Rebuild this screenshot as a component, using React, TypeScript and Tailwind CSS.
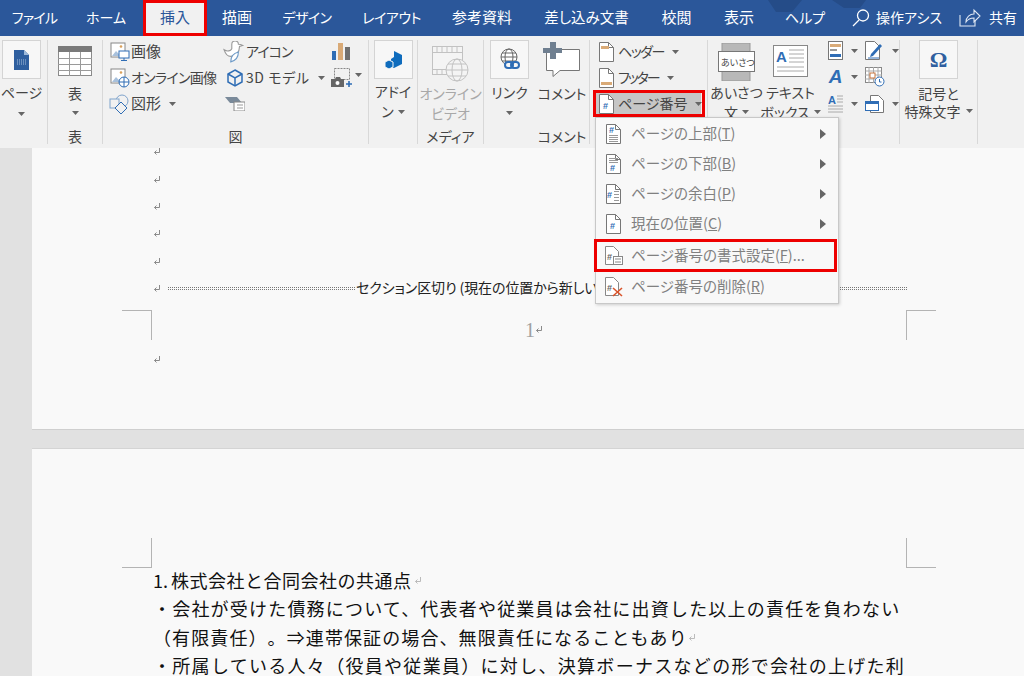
import type { ReactNode } from "react";

const TABS = [
  { label: "ファイル", w: "w-[69px]", t: "text-[14px] tracking-[-0.8px]" },
  { label: "ホーム", w: "w-[74px]", t: "text-[14px]" },
  { label: "挿入", w: "w-[64px]", t: "text-[15px]" },
  { label: "描画", w: "w-[60px]", t: "text-[15px]" },
  { label: "デザイン", w: "w-[80px]", t: "text-[14px] tracking-[-0.6px]" },
  { label: "レイアウト", w: "w-[89px]", t: "text-[14px] tracking-[-0.5px]" },
  { label: "参考資料", w: "w-[92px]", t: "text-[15px]" },
  { label: "差し込み文書", w: "w-[117px]", t: "text-[14.5px]" },
  { label: "校閲", w: "w-[63px]", t: "text-[15px]" },
  { label: "表示", w: "w-[62px]", t: "text-[15px]" },
  { label: "ヘルプ", w: "w-[70px]", t: "text-[14px]" },
];

function Caret({ className = "" }: { className?: string }) {
  return (
    <svg width="7" height="4" viewBox="0 0 7 4" className={`shrink-0 ${className}`}>
      <path d="M0 0h7L3.5 4z" fill="#666" />
    </svg>
  );
}

function ReturnMark({ color = "#8a8a8a" }: { color?: string }) {
  return (
    <svg width="8" height="9" viewBox="0 0 8 9" className="shrink-0">
      <path d="M6.5 1v4.5H1.5M3.5 3.5l-2 2 2 2" fill="none" stroke={color} strokeWidth="1" />
    </svg>
  );
}

function DocIcon({ children, className = "" }: { children?: ReactNode; className?: string }) {
  return (
    <svg width="17" height="20" viewBox="0 0 17 20" className={`shrink-0 ${className}`}>
      <path d="M1.5.5h9l5 5v14h-14z" fill="#fff" stroke="#777" />
      <path d="M10.5.5v5h5" fill="none" stroke="#777" />
      {children}
    </svg>
  );
}

function Hash({ x = 5, y = 15 }: { x?: number; y?: number }) {
  return (
    <text x={x} y={y} fontSize="9" fontWeight="700" fill="#2f6db5" fontFamily="Liberation Sans">
      #
    </text>
  );
}

function Lines({ ys, x1 = 4, x2 = 13 }: { ys: number[]; x1?: number; x2?: number }) {
  return (
    <>
      {ys.map((y) => (
        <path key={y} d={`M${x1} ${y}.5H${x2}`} stroke="#999" />
      ))}
    </>
  );
}

function BigBox({ children }: { children: ReactNode }) {
  return (
    <div className="flex h-[39px] w-[39px] shrink-0 items-center justify-center border border-[#d4d4d4] bg-[#f7f7f7]">
      {children}
    </div>
  );
}

function Group({
  w,
  label,
  children,
  separator = true,
}: {
  w: string;
  label?: string;
  children: ReactNode;
  separator?: boolean;
}) {
  return (
    <div className={`flex h-[104px] shrink-0 flex-col ${w} ${separator ? "border-r border-[#d8d8d8]" : ""}`}>
      <div className="h-[88px]">{children}</div>
      <div className="flex h-[17px] items-center justify-center text-[14px] leading-none text-[#444]">{label}</div>
    </div>
  );
}

function SmallRow({
  icon,
  label,
  caret,
  textClass = "",
  caretClass = "ml-[8px]",
}: {
  icon: ReactNode;
  label: string;
  caret?: boolean;
  textClass?: string;
  caretClass?: string;
}) {
  return (
    <div className="flex h-[26px] items-center whitespace-nowrap text-[14px] text-[#444]">
      <div className="flex w-[23px] shrink-0 items-center justify-center">{icon}</div>
      <span className={`pb-[2px] ${textClass}`}>{label}</span>
      {caret && <Caret className={caretClass} />}
    </div>
  );
}

function PictureIcon({ badge }: { badge: ReactNode }) {
  return (
    <svg width="20" height="20" viewBox="0 0 20 20">
      <rect x="1" y="1" width="14" height="14" fill="#fff" stroke="#888" />
      <circle cx="11" cy="4.5" r="1.3" fill="#d9a05b" />
      <path d="M2 14l4-5 3 3 2-1v3z" fill="#a9c1dc" />
      {badge}
    </svg>
  );
}

function Ribbon() {
  return (
    <div className="flex h-[112px] shrink-0 bg-[#f1f1f1] pt-[4px]">
      <Group w="w-[48px]">
        <div className="flex w-[43px] flex-col items-center whitespace-nowrap text-[14px] leading-[20px] text-[#444]">
          <BigBox>
            <svg width="15" height="20" viewBox="0 0 15 20">
              <path d="M0 0h10l5 5v15H0z" fill="#2f5f9f" />
              <path d="M10 0v5h5z" fill="#9db9d9" />
              <path d="M3 10h9M3 12h9M3 14h9" stroke="#a9c1dc" strokeDasharray="1 1" />
            </svg>
          </BigBox>
          <span className="mt-[3px]">ページ</span>
          <Caret className="mt-[10px]" />
        </div>
      </Group>
      <Group w="w-[55px]" label="表">
        <div className="flex flex-col items-center text-[14px] leading-[20px] text-[#444]">
          <svg width="34" height="30" viewBox="0 0 34 30" className="mt-[6px]">
            <rect x=".5" y=".5" width="33" height="29" fill="#fff" stroke="#8a8a8a" />
            <rect x="0" y="0" width="34" height="6" fill="#7a7a7a" />
            <path d="M11.5 6v24M22.5 6v24M0 12.5h34M0 18.5h34M0 24.5h34" stroke="#9a9a9a" />
          </svg>
          <span className="mt-[7px]">表</span>
          <Caret className="mt-[8px]" />
        </div>
      </Group>
      <Group w="w-[266px]" label="図">
        <div className="flex pl-[5px]">
          <div className="-mt-[1px] w-[115px]">
            <SmallRow
              label="画像"
              textClass="text-[15px]"
              icon={
                <PictureIcon
                  badge={
                    <>
                      <rect x="9" y="9" width="10" height="7" fill="#fff" stroke="#2f6db5" />
                      <path d="M14 16v2M11 18.5h6" stroke="#2f6db5" />
                    </>
                  }
                />
              }
            />
            <SmallRow
              label="オンライン画像"
              textClass="tracking-[-0.7px]"
              icon={
                <PictureIcon
                  badge={
                    <>
                      <circle cx="14" cy="14" r="5" fill="#fff" stroke="#2f6db5" />
                      <path d="M9 14h10M14 9v10" stroke="#2f6db5" />
                    </>
                  }
                />
              }
            />
            <SmallRow
              label="図形"
              caret
              textClass="text-[15px]"
              icon={
                <svg width="21" height="21" viewBox="0 0 21 21">
                  <circle cx="13" cy="7" r="6" fill="none" stroke="#7fa3cc" />
                  <rect x="1" y="5" width="9" height="9" fill="#f1f1f1" stroke="#7fa3cc" />
                  <path d="M12 8l6 6-6 6-6-6z" fill="#f1f1f1" stroke="#2f6db5" />
                </svg>
              }
            />
          </div>
          <div className="-mt-[1px] w-[107px]">
            <SmallRow
              label="アイコン"
              textClass="tracking-[-1px]"
              icon={
                <svg width="22" height="22" viewBox="0 0 20 20" className="-ml-[2px]">
                  <path d="M8 3a3 3 0 0 1 6 0c2 0 4 1 4 1l-3 1c0 5-3 9-8 9-3 0-5-3-6-6 3 2 6 1 7-1z" fill="#fff" stroke="#999" />
                  <path d="M7 19c0-5 3-8 7-9 0 5-3 8-7 9z" fill="#fff" stroke="#6d9ac7" />
                </svg>
              }
            />
            <SmallRow
              label="3D モデル"
              caret
              textClass="tracking-[0.6px]"
              caretClass="ml-[8px]"
              icon={
                <svg width="20" height="20" viewBox="0 0 20 20" fill="none" stroke="#2f6db5" strokeWidth="1.5">
                  <path d="M10 2l7 4v8l-7 4-7-4V6z" />
                  <path d="M3 6l7 4 7-4M10 10v8" />
                </svg>
              }
            />
            <SmallRow
              label=""
              icon={
                <svg width="20" height="14" viewBox="0 0 20 14">
                  <path d="M0 0h12l5 6H5z" fill="#7a8a9a" />
                  <rect x="9" y="5" width="11" height="9" fill="#fff" stroke="#888" />
                  <path d="M12 8h6M12 11h6" stroke="#999" />
                </svg>
              }
            />
          </div>
          <div className="flex w-[30px] flex-col items-start pl-[1px] pt-[2px]">
            <svg width="18" height="19" viewBox="0 0 18 19" className="ml-[1px]">
              <rect x="0" y="9" width="4" height="9" fill="#2f6db5" />
              <rect x="6" y="1" width="5" height="17" fill="#d9aa77" />
              <rect x="13" y="5" width="5" height="13" fill="#6f6f6f" />
            </svg>
            <div className="mt-[7px] flex items-center gap-[2px]">
              <svg width="21" height="20" viewBox="0 0 21 20">
                <rect x="3.5" y=".5" width="15" height="11" fill="none" stroke="#888" strokeDasharray="2 1" />
                <path d="M0 11h4l1-2h4l1 2h3v8H0z" fill="#666" />
                <circle cx="6.5" cy="15" r="2" fill="#fff" />
                <path d="M15 16h6M18 13v6" stroke="#2f6db5" strokeWidth="1.6" />
              </svg>
              <Caret className="-mt-[6px] ml-[1px]" />
            </div>
          </div>
        </div>
      </Group>
      <Group w="w-[49px]">
        <div className="flex flex-col items-center text-[14px] leading-[21px] text-[#444]">
          <BigBox>
            <svg width="20" height="20" viewBox="0 0 20 20">
              <path d="M11 1l8 4v9l-8 4-3-1.5V9l3-2z" fill="#0f6cbd" />
              <path d="M6 10l4 2v5l-4 2-4-2v-5z" fill="#0f6cbd" stroke="#f7f7f7" />
            </svg>
          </BigBox>
          <span className="mt-[2px]">アドイ</span>
          <span className="-mt-[1px] flex items-center gap-[4px]">
            ン<Caret />
          </span>
        </div>
      </Group>
      <Group w="w-[66px]" label="メディア">
        <div className="flex flex-col items-center text-[14px] leading-[20px] text-[#a8a8a8]">
          <svg width="37" height="36" viewBox="0 0 37 36" fill="none" stroke="#c2c2c2" className="mt-[6px]">
            <rect x=".5" y=".5" width="30" height="28" fill="#f4f4f4" />
            <path d="M.5 6.5h30M.5 23.5h30M5 .5v6M10 .5v6M15 .5v6M20 .5v6M25 .5v6M5 23v6M10 23v6M15 23v6" />
            <circle cx="25" cy="24" r="11" fill="#f4f4f4" />
            <ellipse cx="25" cy="24" rx="5" ry="11" />
            <path d="M14 24h22M16 18h18M16 30h18" />
          </svg>
          <span className="mt-[1px]">オンライン</span>
          <span>ビデオ</span>
        </div>
      </Group>
      <Group w="w-[51px]" separator={false}>
        <div className="flex flex-col items-center text-[14px] leading-[20px] text-[#444]">
          <BigBox>
            <svg width="22" height="24" viewBox="0 0 22 24">
              <circle cx="10" cy="9" r="8" fill="#fff" stroke="#666" />
              <ellipse cx="10" cy="9" rx="4" ry="8" fill="none" stroke="#666" />
              <path d="M2 9h16M3 5h14M3 13h14" stroke="#666" />
              <rect x="6" y="14" width="8" height="6" rx="3" fill="#f7f7f7" stroke="#2f6db5" strokeWidth="2" />
              <rect x="12" y="14" width="8" height="6" rx="3" fill="none" stroke="#2f6db5" strokeWidth="2" />
            </svg>
          </BigBox>
          <span className="mt-[3px]">リンク</span>
          <Caret className="mt-[9px]" />
        </div>
      </Group>
      <Group w="w-[55px]" label="コメント">
        <div className="flex flex-col items-center text-[14px] leading-[20px] text-[#444]">
          <svg width="38" height="36" viewBox="0 0 38 36" className="mt-[2px]">
            <path d="M3.5 7.5h33v21H17l-7 6v-6H3.5z" fill="#fff" stroke="#777" />
            <path d="M7 0h6v6h6v5h-6v6H7v-6H0V6h7z" fill="#6f7f90" />
          </svg>
          <span className="mt-[5px]">コメント</span>
        </div>
      </Group>
      <Group w="w-[118px]">
        <div className="relative -mt-[1px] pl-[5px]">
          <SmallRow
            label="ヘッダー"
            caret
            textClass="tracking-[-1.5px]"
            icon={
              <DocIcon>
                <rect x="3" y="4" width="8" height="3" fill="#d9aa77" />
              </DocIcon>
            }
          />
          <SmallRow
            label="フッター"
            caret
            textClass="tracking-[-2px]"
            icon={
              <DocIcon>
                <rect x="3" y="14" width="11" height="3" fill="#d9aa77" />
              </DocIcon>
            }
          />
          <div className="flex h-[26px] w-[106px] items-center bg-[#c6c6c6]">
            <SmallRow
              label="ページ番号"
              caret
              icon={
                <DocIcon>
                  <Hash />
                </DocIcon>
              }
            />
          </div>
          <div className="absolute left-[3px] top-[51px] h-[27px] w-[112px] border-[3px] border-[#ee0000]" />
        </div>
      </Group>
      <Group w="w-[192px]">
        <div className="flex pl-[2px]">
          <div className="flex w-[57px] flex-col items-center whitespace-nowrap text-[14px] leading-[20px] text-[#444]">
            <svg width="37" height="38" viewBox="0 0 37 38" className="mt-[3px]">
              <rect x="4" y="0" width="28" height="38" fill="#b8b8b8" stroke="#999" />
              <rect x=".5" y="8.5" width="36" height="20" fill="#fff" stroke="#777" />
              <text x="3" y="23" fontSize="9" fill="#444" fontFamily="Noto Sans CJK JP">
                あいさつ
              </text>
            </svg>
            <span className="mt-[1px]">あいさつ</span>
            <span className="flex items-center gap-[4px]">
              文<Caret />
            </span>
          </div>
          <div className="flex w-[55px] flex-col items-center whitespace-nowrap text-[14px] leading-[20px] text-[#444]">
            <svg width="35" height="32" viewBox="0 0 35 32" className="mb-[4px] mt-[5px]">
              <rect x=".5" y=".5" width="34" height="31" fill="#fff" stroke="#888" />
              <text x="3" y="17" fontSize="15" fontWeight="700" fill="#2f6db5" fontFamily="Liberation Sans">
                A
              </text>
              <path d="M16 5h15M16 9h15M16 13h15M16 17h15M4 22h27M4 26h27" stroke="#aaa" />
            </svg>
            <span className="mt-[1px]">テキスト</span>
            <span className="flex items-center gap-[4px]">
              ボックス
              <Caret />
            </span>
          </div>
          <div className="flex flex-col gap-[7px] pl-[10px] pt-[1px]">
            <div className="flex items-center gap-[8px]">
              <svg width="15" height="19" viewBox="0 0 15 19">
                <rect x=".5" y=".5" width="14" height="18" fill="#fff" stroke="#777" />
                <rect x="2" y="3" width="11" height="3" fill="#d9aa77" />
                <rect x="2" y="8" width="7" height="2" fill="#999" />
                <rect x="2" y="13" width="11" height="3" fill="#2f6db5" />
              </svg>
              <Caret />
              <svg width="19" height="19" viewBox="0 0 19 19" className="-ml-[1px]">
                <path d="M.5.5h9l5 5v13H.5z" fill="#fff" stroke="#777" />
                <path d="M6 13l9-10 2 2-9 10-3 1z" fill="#2f6db5" />
                <path d="M3 17h11" stroke="#2f6db5" />
              </svg>
              <Caret />
            </div>
            <div className="flex items-center gap-[8px]">
              <span className="w-[15px] text-center font-['Liberation_Sans'] text-[19px] font-bold italic leading-[18px] text-[#2f6db5]">A</span>
              <Caret />
              <svg width="20" height="20" viewBox="0 0 20 20" className="-ml-[1px]">
                <rect x=".5" y=".5" width="16" height="15" fill="#fff" stroke="#888" />
                <path d="M.5 4h16M4 0v16M8.5 0v16M13 0v16M0 8h17M0 12h17" stroke="#aaa" />
                <rect x="5" y="6" width="5" height="5" fill="#fff" stroke="#c8743c" />
                <circle cx="14.5" cy="14.5" r="4.5" fill="#fff" stroke="#2f6db5" />
                <path d="M14.5 12v3h2" fill="none" stroke="#2f6db5" />
              </svg>
            </div>
            <div className="flex items-center gap-[8px]">
              <svg width="15" height="20" viewBox="0 0 15 20">
                <text x="0" y="10" fontSize="11" fontWeight="700" fill="#2f6db5" fontFamily="Liberation Sans">
                  A
                </text>
                <path d="M9 2h6M9 5h6M9 8h6M0 12h15M0 15h15M0 18h15" stroke="#aaa" />
              </svg>
              <Caret />
              <svg width="19" height="19" viewBox="0 0 19 19" className="-ml-[1px]">
                <path d="M5.5.5h8l5 5v12h-13z" fill="#fff" stroke="#777" />
                <rect x=".5" y="6.5" width="13" height="9" fill="#fff" stroke="#2f6db5" />
                <rect x="1" y="7" width="12" height="2" fill="#2f6db5" />
              </svg>
              <Caret />
            </div>
          </div>
        </div>
      </Group>
      <Group w="w-[78px]">
        <div className="flex flex-col items-center whitespace-nowrap text-[14px] leading-[18px] text-[#444]">
          <BigBox>
            <span className="font-['Liberation_Serif'] text-[22px] font-bold leading-none text-[#2f5f9f]">Ω</span>
          </BigBox>
          <span className="mt-[5px]">記号と</span>
          <span className="flex items-center gap-[5px]">
            特殊文字
            <Caret />
          </span>
        </div>
      </Group>
    </div>
  );
}

function PageMenu() {
  const items: { pre: string; key: string; post?: string; sub?: boolean; h: string; icon: ReactNode; boxed?: boolean }[] = [
    {
      pre: "ページの上部(",
      key: "T",
      sub: true,
      h: "h-[30px]",
      icon: (
        <DocIcon>
          <Hash x={4} y={9} />
          <Lines ys={[11, 13, 15, 17]} />
        </DocIcon>
      ),
    },
    {
      pre: "ページの下部(",
      key: "B",
      sub: true,
      h: "h-[30px]",
      icon: (
        <DocIcon>
          <Lines ys={[4, 6, 8]} />
          <Hash x={5} y={17} />
        </DocIcon>
      ),
    },
    {
      pre: "ページの余白(",
      key: "P",
      sub: true,
      h: "h-[30px]",
      icon: (
        <DocIcon>
          <Hash x={2} y={14} />
          <Lines ys={[7, 10, 13, 16]} x1={9} x2={14} />
        </DocIcon>
      ),
    },
    {
      pre: "現在の位置(",
      key: "C",
      sub: true,
      h: "h-[30px]",
      icon: (
        <DocIcon>
          <Hash x={5} y={15} />
        </DocIcon>
      ),
    },
    {
      pre: "ページ番号の書式設定(",
      key: "F",
      post: "...",
      h: "h-[33px]",
      boxed: true,
      icon: (
        <svg width="19" height="20" viewBox="0 0 19 20">
          <path d="M1.5.5h8l5 5v13h-13z" fill="#fff" stroke="#888" />
          <text x="3" y="14" fontSize="9" fontWeight="700" fill="#666" fontFamily="Liberation Sans">
            #
          </text>
          <rect x="9.5" y="10.5" width="9" height="8" fill="#fff" stroke="#888" />
          <path d="M11 13h6M11 16h6" stroke="#888" />
        </svg>
      ),
    },
    {
      pre: "ページ番号の削除(",
      key: "R",
      h: "h-[30px]",
      icon: (
        <svg width="20" height="20" viewBox="0 0 20 20">
          <path d="M1.5.5h8l5 5v13h-13z" fill="#fff" stroke="#888" />
          <text x="3" y="14" fontSize="9" fontWeight="700" fill="#666" fontFamily="Liberation Sans">
            #
          </text>
          <path d="M9 11l9 8M18 11l-9 8" stroke="#d9542b" strokeWidth="1.6" />
        </svg>
      ),
    },
  ];
  return (
    <div className="absolute left-[595px] top-[117px] z-10 w-[244px] border border-[#c8c8c8] bg-[#f8f8f8] py-[1px] shadow-[1px_1px_3px_rgba(0,0,0,0.18)]">
      {items.map((it) => (
        <div key={it.key} className={`relative flex items-center text-[14.5px] text-[#808080] ${it.h}`}>
          <div className="flex w-[35px] shrink-0 justify-center">{it.icon}</div>
          <span className="whitespace-nowrap pb-[2px]">
            {it.pre}
            <span className="underline">{it.key}</span>){it.post}
          </span>
          {it.sub && (
            <svg width="6" height="10" viewBox="0 0 6 10" className="absolute right-[12px]">
              <path d="M0 0l6 5-6 5z" fill="#666" />
            </svg>
          )}
          {it.boxed && <div className="absolute -left-[2px] right-[1px] top-0 bottom-0 border-[3px] border-[#ee0000]" />}
        </div>
      ))}
    </div>
  );
}

function CropMarks({ bottom = false }: { bottom?: boolean }) {
  const cls = bottom ? "border-b" : "border-t";
  return (
    <div className="flex h-[30px] justify-between pl-[90px] pr-[88px]">
      <div className={`h-[30px] w-[30px] border-r border-[#b4b4b4] ${cls}`} />
      <div className={`h-[30px] w-[30px] border-l border-[#b4b4b4] ${cls}`} />
    </div>
  );
}

const MARK_ROWS = [0, 1, 2, 3, 4];

function Document() {
  return (
    <div className="flex min-h-0 flex-1 overflow-hidden bg-[#e1e1e1] pl-[32px]">
      <div className="flex-1">
        <div className="h-[282px] overflow-hidden border-b border-[#cfcfcf] bg-[#f9f9f9]">
          <div className="-mt-[10px] pl-[121px]">
            {MARK_ROWS.map((r) => (
              <div key={r} className="flex h-[27.4px] items-center">
                <ReturnMark />
              </div>
            ))}
          </div>
          <div className="flex h-[27px] items-center whitespace-nowrap pl-[121px] text-[14px] tracking-[-0.1px] text-[#222]">
            <ReturnMark />
            <div className="ml-[7px] h-[3px] w-[187px] border-y border-dotted border-[#777]" />
            <span className="ml-[1px] pb-[1px]">セクション区切り (現在の位置から新しいページ)</span>
            <div className="ml-auto mr-[117px] h-[3px] w-[80px] shrink-0 border-y border-dotted border-[#777]" />
          </div>
          <div className="mt-[8px]">
            <CropMarks />
          </div>
          <div className="-mt-[20px] flex items-center justify-center pl-[12px] font-['Liberation_Serif'] text-[20px] leading-[20px] text-[#a0a0a0]">
            1
            <ReturnMark />
          </div>
          <div className="mt-[6px] flex h-[28px] items-center pl-[121px]">
            <ReturnMark />
          </div>
        </div>
        <div className="mt-[18px] h-[300px] border-t border-[#d4d4d4] bg-[#f9f9f9]">
          <div className="pt-[89px]">
            <CropMarks bottom />
          </div>
          <div className="-mt-[2px] whitespace-nowrap pl-[121px] font-['Noto_Sans_CJK_JP'] text-[18px] leading-[28.4px] text-[#111] [font-feature-settings:normal] [text-spacing-trim:space-all]">
            <div className="flex items-center">
              <span className="w-[18px]">1.</span>
              <span className="tracking-[0.5px]">株式会社と合同会社の共通点</span>
              <span className="ml-[2px]">
                <ReturnMark color="#bbb" />
              </span>
            </div>
            <div className="tracking-[1.2px]">・会社が受けた債務について、代表者や従業員は会社に出資した以上の責任を負わない</div>
            <div className="flex items-center tracking-[1.1px]">
              <span>（有限責任）。⇒連帯保証の場合、無限責任になることもあり</span>
              <ReturnMark color="#bbb" />
            </div>
            <div className="tracking-[1.3px]">・所属している人々（役員や従業員）に対し、決算ボーナスなどの形で会社の上げた利</div>
          </div>
        </div>
      </div>
    </div>
  );
}

export default function App() {
  return (
    <div className="relative flex h-[676px] w-[1024px] flex-col overflow-hidden bg-[#e1e1e1] font-['Noto_Sans_CJK_JP','Noto_Sans',sans-serif] [font-feature-settings:'palt']">
      <div className="relative flex h-[36px] shrink-0 items-center bg-[#2b579a] text-[14px] text-white">
        <svg width="130" height="12" viewBox="0 0 130 12" className="absolute left-[760px] top-0">
          <path d="M8 0h34l-10 12H16zM72 0h34l-6 8H84z" fill="#254c88" />
        </svg>
        {TABS.map((t) => (
          <div
            key={t.label}
            className={`relative flex h-full shrink-0 items-center justify-center pb-[2px] ${t.w} ${t.t} ${
              t.label === "挿入" ? "border-[3px] border-[#ee0000] bg-[#f1f1f1] text-[#2b579a]" : ""
            }`}
          >
            {t.label}
          </div>
        ))}
        <svg width="20" height="20" viewBox="0 0 20 20" fill="none" stroke="#fff" strokeWidth="1.3" className="ml-[11px] shrink-0">
          <circle cx="12" cy="7.5" r="5.5" />
          <path d="M8 12l-6 6" />
        </svg>
        <span className="ml-[5px] whitespace-nowrap pb-[2px]">操作アシス</span>
        <svg width="22" height="20" viewBox="0 0 22 20" fill="none" stroke="#dfe7f3" strokeWidth="1.1" className="ml-[17px] shrink-0">
          <path d="M1 7v11h15v-5" />
          <path d="M7 14c0-5 4-8 8-8V2l6 6-6 6v-4c-4 0-6 1-8 4z" />
        </svg>
        <span className="ml-[8px] whitespace-nowrap pb-[2px]">共有</span>
      </div>
      <Ribbon />
      <Document />
      <PageMenu />
    </div>
  );
}
